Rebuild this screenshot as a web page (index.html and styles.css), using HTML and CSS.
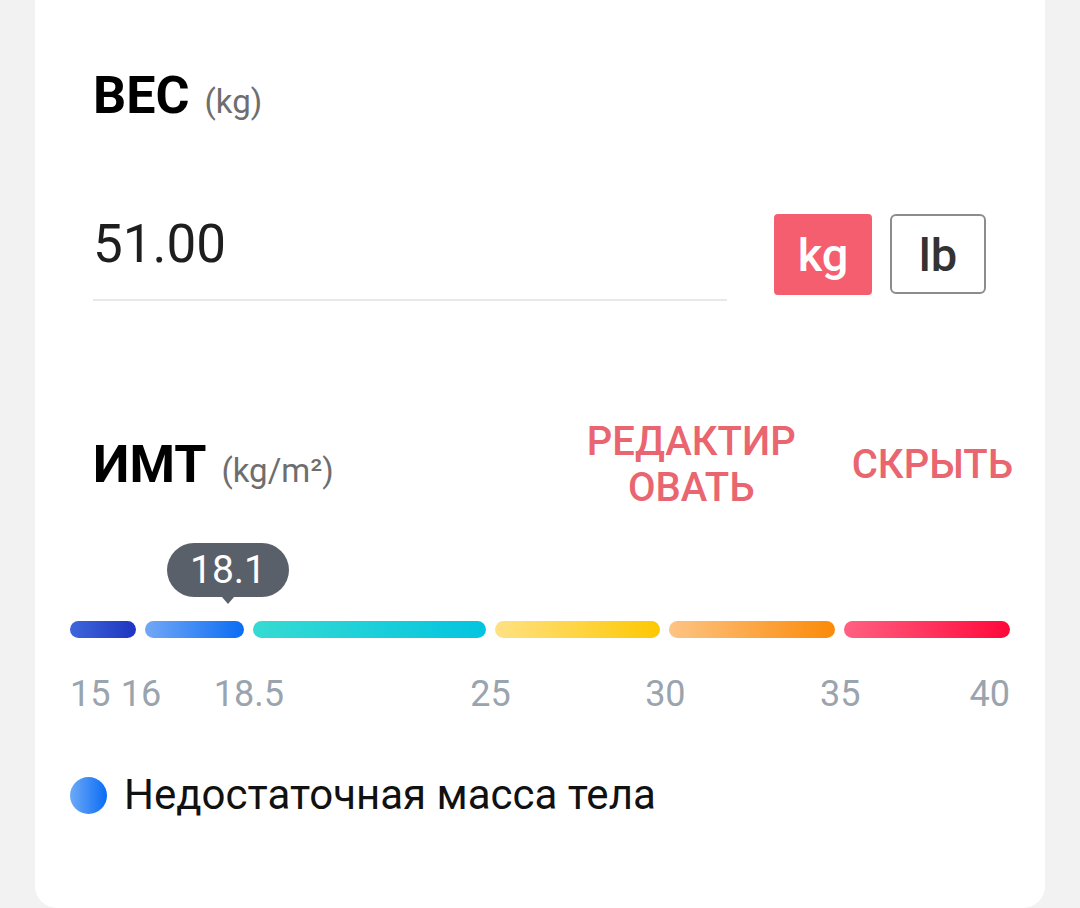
FILE: index.html
```html
<!DOCTYPE html>
<html lang="ru">
<head>
  <meta charset="UTF-8" />
  <meta name="viewport" content="width=device-width, initial-scale=1" />
  <title>ИМТ</title>
  <link rel="stylesheet" href="styles.css">
</head>
<body>

  <div class="card">
    <div class="title-row weight-title">
      <span class="title">ВЕС</span>
      <span class="unit">(kg)</span>
    </div>

    <div class="weight-row">
      <div class="weight-field">
        <span class="weight-value">51.00</span>
      </div>
      <button class="unit-btn active">kg</button>
      <button class="unit-btn">lb</button>
    </div>

    <div class="bmi-head">
      <div class="title-row">
        <span class="title">ИМТ</span>
        <span class="unit">(kg/m²)</span>
      </div>
      <div class="actions">
        <a class="action edit">РЕДАКТИРОВАТЬ</a>
        <a class="action hide">СКРЫТЬ</a>
      </div>
    </div>

    <div class="scale">
      <div class="marker">18.1</div>
      <div class="bars">
        <span class="bar b1"></span>
        <span class="bar b2"></span>
        <span class="bar b3"></span>
        <span class="bar b4"></span>
        <span class="bar b5"></span>
        <span class="bar b6"></span>
      </div>
      <div class="ticks">
        <span class="tick first">15</span>
        <span class="tick c2">16</span>
        <span class="tick c3">18.5</span>
        <span class="tick c4">25</span>
        <span class="tick c5">30</span>
        <span class="tick c6">35</span>
        <span class="tick last">40</span>
      </div>
    </div>

    <div class="legend">
      <span class="dot"></span>
      <span class="legend-text">Недостаточная масса тела</span>
    </div>
  </div>

</body>
</html>
```

FILE: styles.css
```css
body {
  margin: 0;
  background: #f2f2f2;
  font-family: Roboto, 'Noto Sans', sans-serif;
  height: 908px;
  overflow: hidden;
}
.card {
  width: 1010px;
  height: 908px;
  margin-left: 35px;
  box-sizing: border-box;
  padding: 0 35px;
  background: #fff;
  border-radius: 0 0 22px 22px;
}
.title-row {
  display: flex;
  align-items: baseline;
  padding-left: 23px;
}
.weight-title {
  padding-top: 70px;
}
.title {
  font-size: 52px;
  line-height: 52px;
  font-weight: bold;
  color: #000;
}
.unit {
  font-size: 33px;
  color: #6e6e6e;
  margin-left: 15px;
}
.weight-row {
  display: flex;
  align-items: flex-start;
  margin-top: 92px;
  padding-left: 23px;
}
.weight-field {
  width: 634px;
  height: 85px;
  border-bottom: 2px solid #e8e8e8;
}
.weight-value {
  display: block;
  padding-top: 4px;
  font-size: 53px;
  line-height: 53px;
  color: #1e1e1e;
}
.unit-btn {
  font-family: inherit;
  width: 98px;
  height: 81px;
  margin-left: 47px;
  padding: 0;
  background: #fff;
  border: 2px solid #8c8c8c;
  border-radius: 6px;
  font-size: 47px;
  font-weight: 500;
  color: #333;
}
.unit-btn + .unit-btn {
  width: 96px;
  height: 80px;
  margin-left: 18px;
}
.unit-btn.active {
  background: #f45e6f;
  border-color: #f45e6f;
  color: #fff;
  border-radius: 4px;
}
.bmi-head {
  display: flex;
  align-items: center;
  margin-top: 118px;
  margin-right: -3px;
}
.actions {
  display: flex;
  align-items: center;
  margin-left: auto;
}
.action {
  color: #e9656f;
  font-size: 40px;
  line-height: 46px;
  font-weight: 500;
  text-align: center;
}
.edit {
  width: 215px;
  word-break: break-all;
}
.hide {
  margin-left: 53px;
}
.scale {
  position: relative;
  padding-top: 110px;
}
.marker {
  position: absolute;
  top: 32px;
  left: 97px;
  width: 122px;
  height: 54px;
  border-radius: 27px;
  background: #5a6069;
  color: #fff;
  font-size: 39px;
  line-height: 54px;
  text-align: center;
}
.marker::after {
  content: '';
  position: absolute;
  left: 55px;
  bottom: -7px;
  border-left: 6px solid transparent;
  border-right: 6px solid transparent;
  border-top: 7px solid #5a6069;
}
.bars,
.ticks {
  display: grid;
  grid-template-columns: 66fr 99fr 233fr 166fr 166fr 166fr;
  column-gap: 9px;
}
.bar {
  height: 17px;
  border-radius: 9px;
}
.b1 { background: linear-gradient(to right, #3e67db, #1f35c0); }
.b2 { background: linear-gradient(to right, #72a8f6, #0b6cf4); }
.b3 { background: linear-gradient(to right, #36dbd2, #03c4e0); }
.b4 { background: linear-gradient(to right, #ffe183, #fdc802); }
.b5 { background: linear-gradient(to right, #fdc484, #fb8a08); }
.b6 { background: linear-gradient(to right, #ff6182, #ff083a); }
.ticks {
  margin-top: 38px;
}
.tick {
  grid-row: 1;
  justify-self: start;
  font-size: 36px;
  line-height: 36px;
  color: #9aa4ae;
  transform: translateX(calc(-50% - 4px));
}
.tick.first { grid-column: 1; transform: none; }
.tick.c2 { grid-column: 2; }
.tick.c3 { grid-column: 3; }
.tick.c4 { grid-column: 4; }
.tick.c5 { grid-column: 5; }
.tick.c6 { grid-column: 6; }
.tick.last {
  grid-column: 6;
  justify-self: end;
  transform: none;
}
.legend {
  display: flex;
  align-items: center;
  margin-top: 63px;
}
.dot {
  width: 37px;
  height: 37px;
  border-radius: 50%;
  background: linear-gradient(to right, #6eaaf7, #0a6cf5);
}
.legend-text {
  margin-left: 17px;
  font-size: 42px;
  line-height: 40px;
  color: #111;
}
```
